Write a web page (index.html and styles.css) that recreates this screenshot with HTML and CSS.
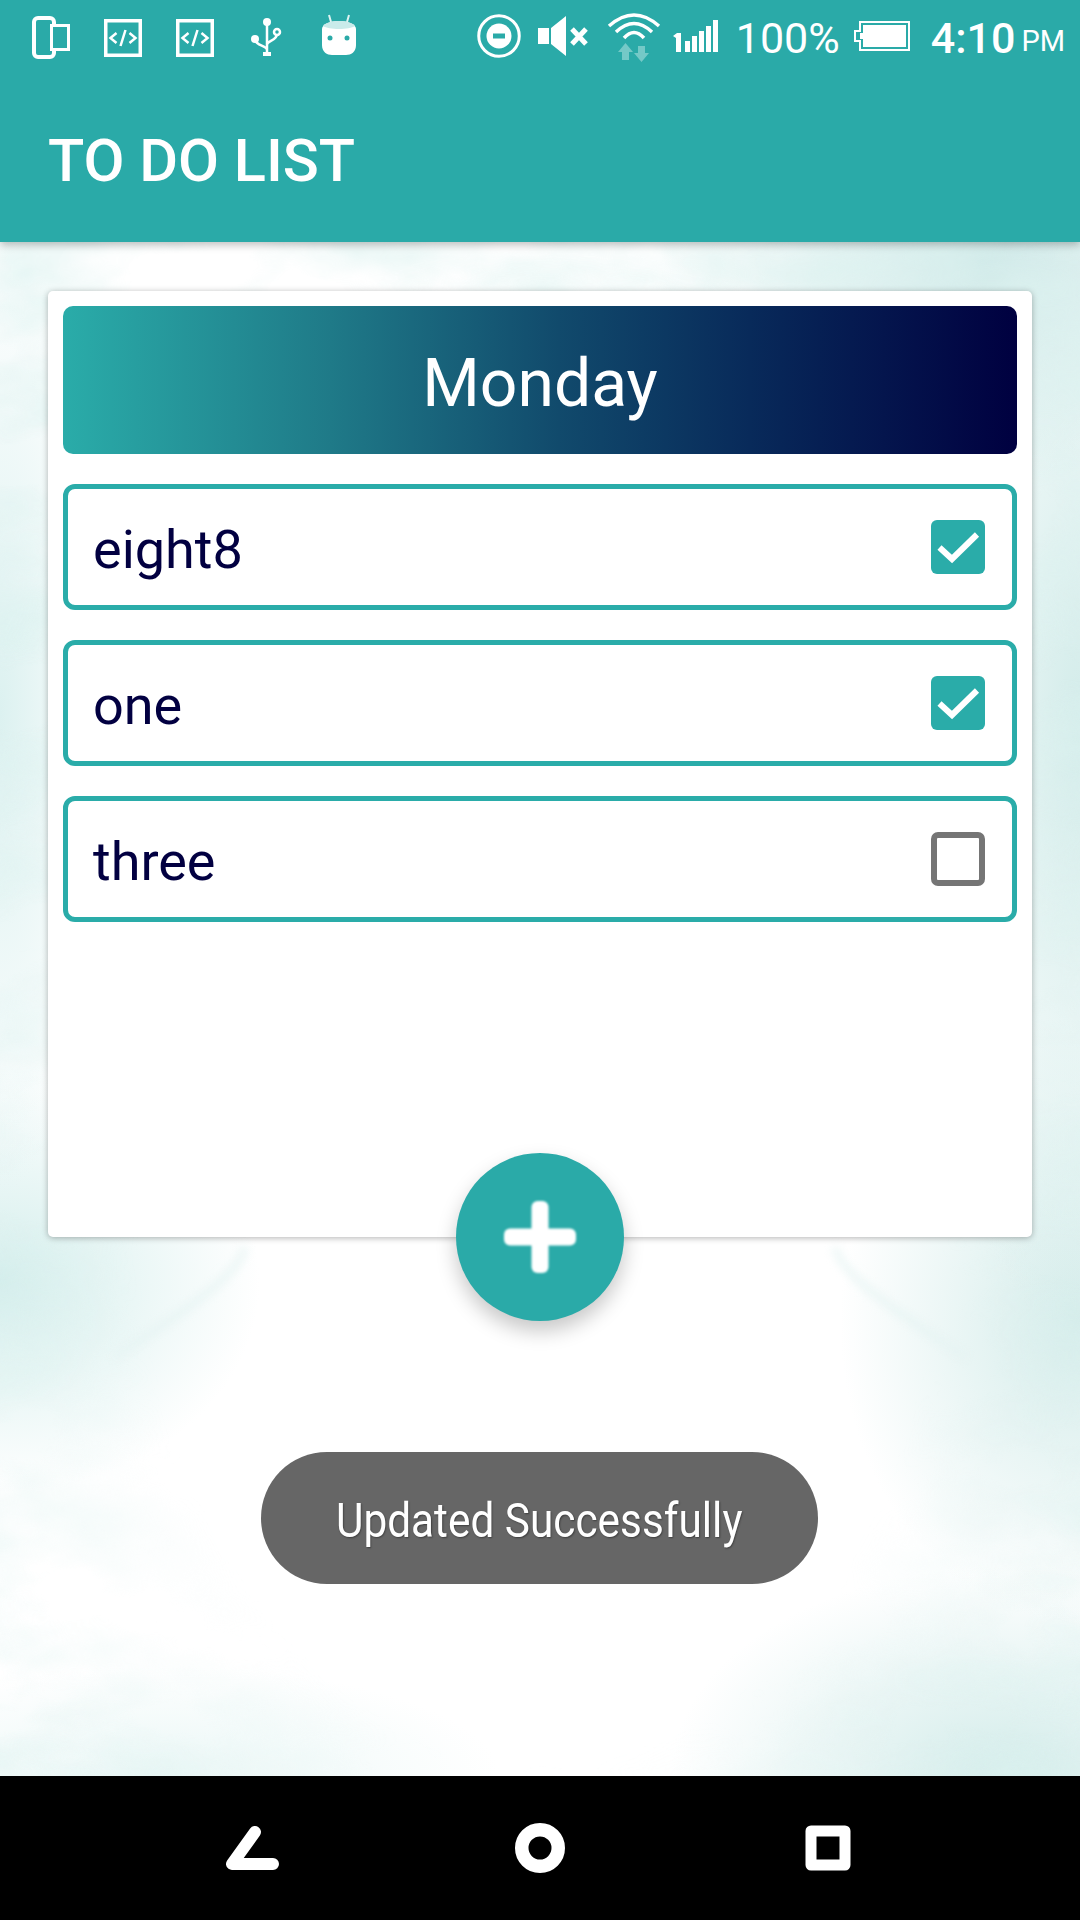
FILE: index.html
```html
<!DOCTYPE html>
<html lang="en">
<head>
    <meta charset="UTF-8">
    <meta name="viewport" content="width=device-width, initial-scale=1.0">
    <title>To Do List</title>
    <link rel="stylesheet" href="styles.css">
</head>
<body>
    <div class="screen">
        <header class="appbar">
            <div class="status">
                <div class="status-left">
                    <svg class="cell" viewBox="0 0 72 72"><rect x="19" y="18" width="20" height="39" rx="4" fill="none" stroke="#fff" stroke-width="4"/><rect x="36.500" y="25.500" width="17" height="24" fill="#2aaaa8" stroke="#fff" stroke-width="3"/></svg>
                    <svg class="cell" viewBox="0 0 72 72"><rect x="18.750" y="20.750" width="34.500" height="34.500" fill="none" stroke="#fff" stroke-width="3.500"/><path d="M29.500 33l-6 5 6 5M42.500 33l6 5-6 5M38.500 30l-5 16" fill="none" stroke="#fff" stroke-width="2.500"/></svg>
                    <svg class="cell" viewBox="0 0 72 72"><rect x="18.750" y="20.750" width="34.500" height="34.500" fill="none" stroke="#fff" stroke-width="3.500"/><path d="M29.500 33l-6 5 6 5M42.500 33l6 5-6 5M38.500 30l-5 16" fill="none" stroke="#fff" stroke-width="2.500"/></svg>
                    <svg class="cell" viewBox="0 0 72 72"><g fill="none" stroke="#fff" stroke-width="2.500"><path d="M36 24v31M24 39c0 7 12 6 12 11M46 34c0 7-10 6-10 11"/><circle cx="46" cy="32" r="3"/></g><circle cx="36" cy="22" r="4" fill="#fff"/><circle cx="24" cy="39" r="4" fill="#fff"/><rect x="32" y="52" width="8" height="4" fill="#fff"/></svg>
                    <svg class="cell" viewBox="0 0 72 72"><path d="M26 15l2 7M46 15l-2 7" stroke="#dff3f2" stroke-width="2"/><path d="M19 29c0-5 8-8 17-8s17 3 17 8v16c0 7-5 10-10 10H29c-5 0-10-3-10-10z" fill="#fff"/><path d="M20 26c2-3 9-5 16-5s14 2 16 5c-3 2-9 3-16 3s-13-1-16-3z" fill="#c9ebea"/><circle cx="27" cy="38" r="2.500" fill="#2aaaa8"/><circle cx="44" cy="38" r="2.500" fill="#2aaaa8"/></svg>
                </div>
                <div class="status-right">
                    <svg class="ic-dnd" viewBox="0 0 44 44"><circle cx="22" cy="22" r="20.250" fill="none" stroke="#fff" stroke-width="3"/><circle cx="22" cy="22" r="12.500" fill="#fff"/><rect x="16" y="19.500" width="12" height="5" fill="#2aaaa8"/></svg>
                    <svg class="ic-sound" viewBox="0 0 50 42"><path d="M0 13h11v16H0zM13 13l15-12v40L13 29z" fill="#fff"/><path d="M34 14l14 15M48 14L34 29" stroke="#fff" stroke-width="5"/></svg>
                    <svg class="ic-wifi" viewBox="0 0 54 52"><g fill="none" stroke="#fff" stroke-width="3.500"><path d="M2 14Q27-8 52 14"/><path d="M9 20Q27 3 45 20"/><path d="M17 26Q27 15 37 26"/></g><path d="M18.500 31l7.500 9h-4v8h-7v-8h-4zM34.500 50l-7.500-9h4v-7h7v7h4z" fill="#74c9c7"/></svg>
                    <svg class="ic-signal" viewBox="0 0 46 34"><path d="M0 17l4-3h4v19H3V19zM12 22h5v11h-5zM19 17h5v16h-5zM26 12h5v21h-5zM33 7h5v26h-5zM40 1h5v32h-5z" fill="#fff"/></svg>
                    <span class="percent">100%</span>
                    <svg class="ic-battery" viewBox="0 0 58 32"><path d="M7 2h49v28H7v-9H2V11h5z" fill="none" stroke="#fff" stroke-width="2"/><path d="M10 5h43v22H10v-8H7v-6h3z" fill="#fff"/></svg>
                    <span class="clock">4:10</span>
                    <span class="ampm">PM</span>
                </div>
            </div>
            <h1 class="title">TO DO LIST</h1>
        </header>

        <main class="content">
            <svg class="marble" width="1080" height="1534" aria-hidden="true">
                <filter id="cloud" x="0" y="0" width="100%" height="100%">
                    <feTurbulence type="fractalNoise" baseFrequency="0.007 0.012" numOctaves="4" seed="11"/>
                    <feColorMatrix values="0 0 0 0 0.72  0 0 0 0 0.89  0 0 0 0 0.87  1.5 0 0 0 -0.55"/>
                </filter>
                <rect width="1080" height="1534" filter="url(#cloud)"/>
            </svg>
            <svg class="wisps" width="1080" height="1534" aria-hidden="true">
                <path d="M245 1005c-6 30-70 70-130 110M835 1005c6 30 70 70 130 110" fill="none" stroke="#e4f3f2" stroke-width="5"/>
            </svg>
            <section class="card">
                <div class="day">Monday</div>
                <div class="task">
                    <span>eight8</span>
                    <svg class="check" viewBox="0 0 54 54"><rect width="54" height="54" rx="6" fill="#2aaca9"/><path d="M8.500 27.500L21 39l25-24.500" fill="none" stroke="#fff" stroke-width="6"/></svg>
                </div>
                <div class="task">
                    <span>one</span>
                    <svg class="check" viewBox="0 0 54 54"><rect width="54" height="54" rx="6" fill="#2aaca9"/><path d="M8.500 27.500L21 39l25-24.500" fill="none" stroke="#fff" stroke-width="6"/></svg>
                </div>
                <div class="task">
                    <span>three</span>
                    <svg class="check" viewBox="0 0 54 54"><rect x="3" y="3" width="48" height="48" rx="4" fill="#fff" stroke="#757575" stroke-width="6"/></svg>
                </div>
            </section>
            <button class="fab" aria-label="Add">
                <svg viewBox="0 0 72 72"><rect x="27.500" width="17" height="72" rx="6" fill="#fff"/><rect y="27.500" width="72" height="17" rx="6" fill="#fff"/></svg>
            </button>
            <div class="toast"><span>Updated Successfully</span></div>
        </main>

        <nav class="navbar">
            <svg viewBox="0 0 54 46"><path d="M30 7L7 39h41" fill="none" stroke="#fff" stroke-width="12" stroke-linecap="round" stroke-linejoin="round"/></svg>
            <svg viewBox="0 0 54 54"><circle cx="27" cy="27" r="18.250" fill="none" stroke="#fff" stroke-width="13.500"/></svg>
            <svg viewBox="0 0 54 46"><rect x="10" y="6" width="34" height="34" fill="none" stroke="#fff" stroke-width="11" stroke-linejoin="round"/></svg>
        </nav>
    </div>
</body>
</html>
```

FILE: styles.css
```css
* {
    box-sizing: border-box;
}
body {
    margin: 0;
    font-family: Roboto, sans-serif;
}
.screen {
    display: flex;
    flex-direction: column;
    width: 1080px;
    height: 1920px;
    overflow: hidden;
}
.appbar {
    position: relative;
    z-index: 2;
    height: 242px;
    flex-shrink: 0;
    background-color: #2aaaa8;
    color: #fff;
    box-shadow: 0 3px 8px rgba(0, 0, 0, 0.25);
}
.status {
    display: flex;
    justify-content: space-between;
    height: 72px;
}
.status-left {
    display: flex;
    padding-left: 15px;
}
.cell {
    width: 72px;
    height: 72px;
}
.status-right {
    display: flex;
    align-items: center;
    padding-right: 15px;
}
.ic-dnd {
    width: 44px;
    height: 44px;
}
.ic-sound {
    width: 50px;
    height: 42px;
    margin-left: 17px;
}
.ic-wifi {
    width: 54px;
    height: 52px;
    margin-left: 19px;
    margin-top: 3px;
}
.ic-signal {
    width: 46px;
    height: 34px;
    margin-left: 12px;
}
.percent {
    margin-left: 17px;
    margin-top: 4px;
    font-size: 43px;
    font-weight: 375;
}
.ic-battery {
    width: 58px;
    height: 32px;
    margin-left: 13px;
}
.clock {
    margin-left: 20px;
    margin-top: 4px;
    font-size: 43px;
    font-weight: 475;
}
.ampm {
    margin-left: 6px;
    margin-top: 10px;
    font-size: 29px;
}
.title {
    margin: 0;
    padding: 54px 0 0 48px;
    font-size: 59.5px;
    font-weight: 500;
    line-height: 70px;
}
.content {
    position: relative;
    flex: 1;
    padding: 49px 48px 0;
    background-color: #fff;
    background-image:
        radial-gradient(ellipse 320px 220px at 980px 20px, #cfe9e8, transparent),
        radial-gradient(ellipse 110px 480px at 0 470px, #dcf1f0, transparent),
        radial-gradient(ellipse 170px 620px at 1080px 480px, #d3ecea, transparent),
        radial-gradient(ellipse 260px 210px at 0 1040px, #d4eeec, transparent),
        radial-gradient(ellipse 240px 300px at 1080px 1080px, #d4ecea, transparent),
        radial-gradient(ellipse 340px 210px at 1010px 1534px, #d3ecea, transparent),
        radial-gradient(ellipse 340px 110px at 160px 1534px, #eaf7f6, transparent);
}
.marble {
    position: absolute;
    top: 0;
    left: 0;
    -webkit-mask-image: radial-gradient(ellipse 62% 62% at 50% 62%, transparent 60%, #000 100%);
    mask-image: radial-gradient(ellipse 62% 62% at 50% 62%, transparent 60%, #000 100%);
}
.wisps {
    position: absolute;
    top: 0;
    left: 0;
    filter: blur(5px);
}
.card {
    position: relative;
    display: flex;
    flex-direction: column;
    gap: 30px;
    height: 946px;
    padding: 15px;
    background-color: #fff;
    border-radius: 5px;
    box-shadow: 0 1px 6px rgba(0, 0, 0, 0.3);
}
.day {
    height: 148px;
    padding-top: 7px;
    background: linear-gradient(90deg, #2aaca9, #1f7a88 28%, #114a6c 52%, #082a5a 72%, #000040);
    border-radius: 10px;
    color: #fff;
    font-size: 66px;
    line-height: 141px;
    text-align: center;
}
.task {
    display: flex;
    align-items: center;
    justify-content: space-between;
    height: 126px;
    padding: 0 27px 0 25px;
    border: 5px solid #2aaca9;
    border-radius: 12px;
    color: #020041;
    font-size: 54px;
}
.task span {
    padding-top: 5px;
}
.check {
    width: 54px;
    height: 54px;
}
.fab {
    position: absolute;
    top: 911px;
    left: 456px;
    display: flex;
    align-items: center;
    justify-content: center;
    width: 168px;
    height: 168px;
    padding: 0;
    background-color: #2aaaa8;
    border: none;
    border-radius: 50%;
    box-shadow: 0 10px 20px rgba(0, 0, 0, 0.22);
}
.fab svg {
    width: 72px;
    height: 72px;
    filter: blur(0.8px);
}
.toast {
    position: absolute;
    top: 1210px;
    left: 261px;
    display: flex;
    align-items: center;
    justify-content: center;
    width: 557px;
    height: 132px;
    padding-top: 5px;
    background-color: #666;
    border-radius: 66px;
    color: #fff;
    font-size: 49px;
    text-shadow: 1px 1px 2px rgba(0, 0, 0, 0.4);
    white-space: nowrap;
}
.toast span {
    transform: scaleX(0.864);
}
.navbar {
    display: flex;
    justify-content: space-between;
    align-items: center;
    height: 144px;
    flex-shrink: 0;
    padding: 0 225px;
    background-color: #000;
}
.navbar svg {
    width: 54px;
    height: 54px;
}
```
